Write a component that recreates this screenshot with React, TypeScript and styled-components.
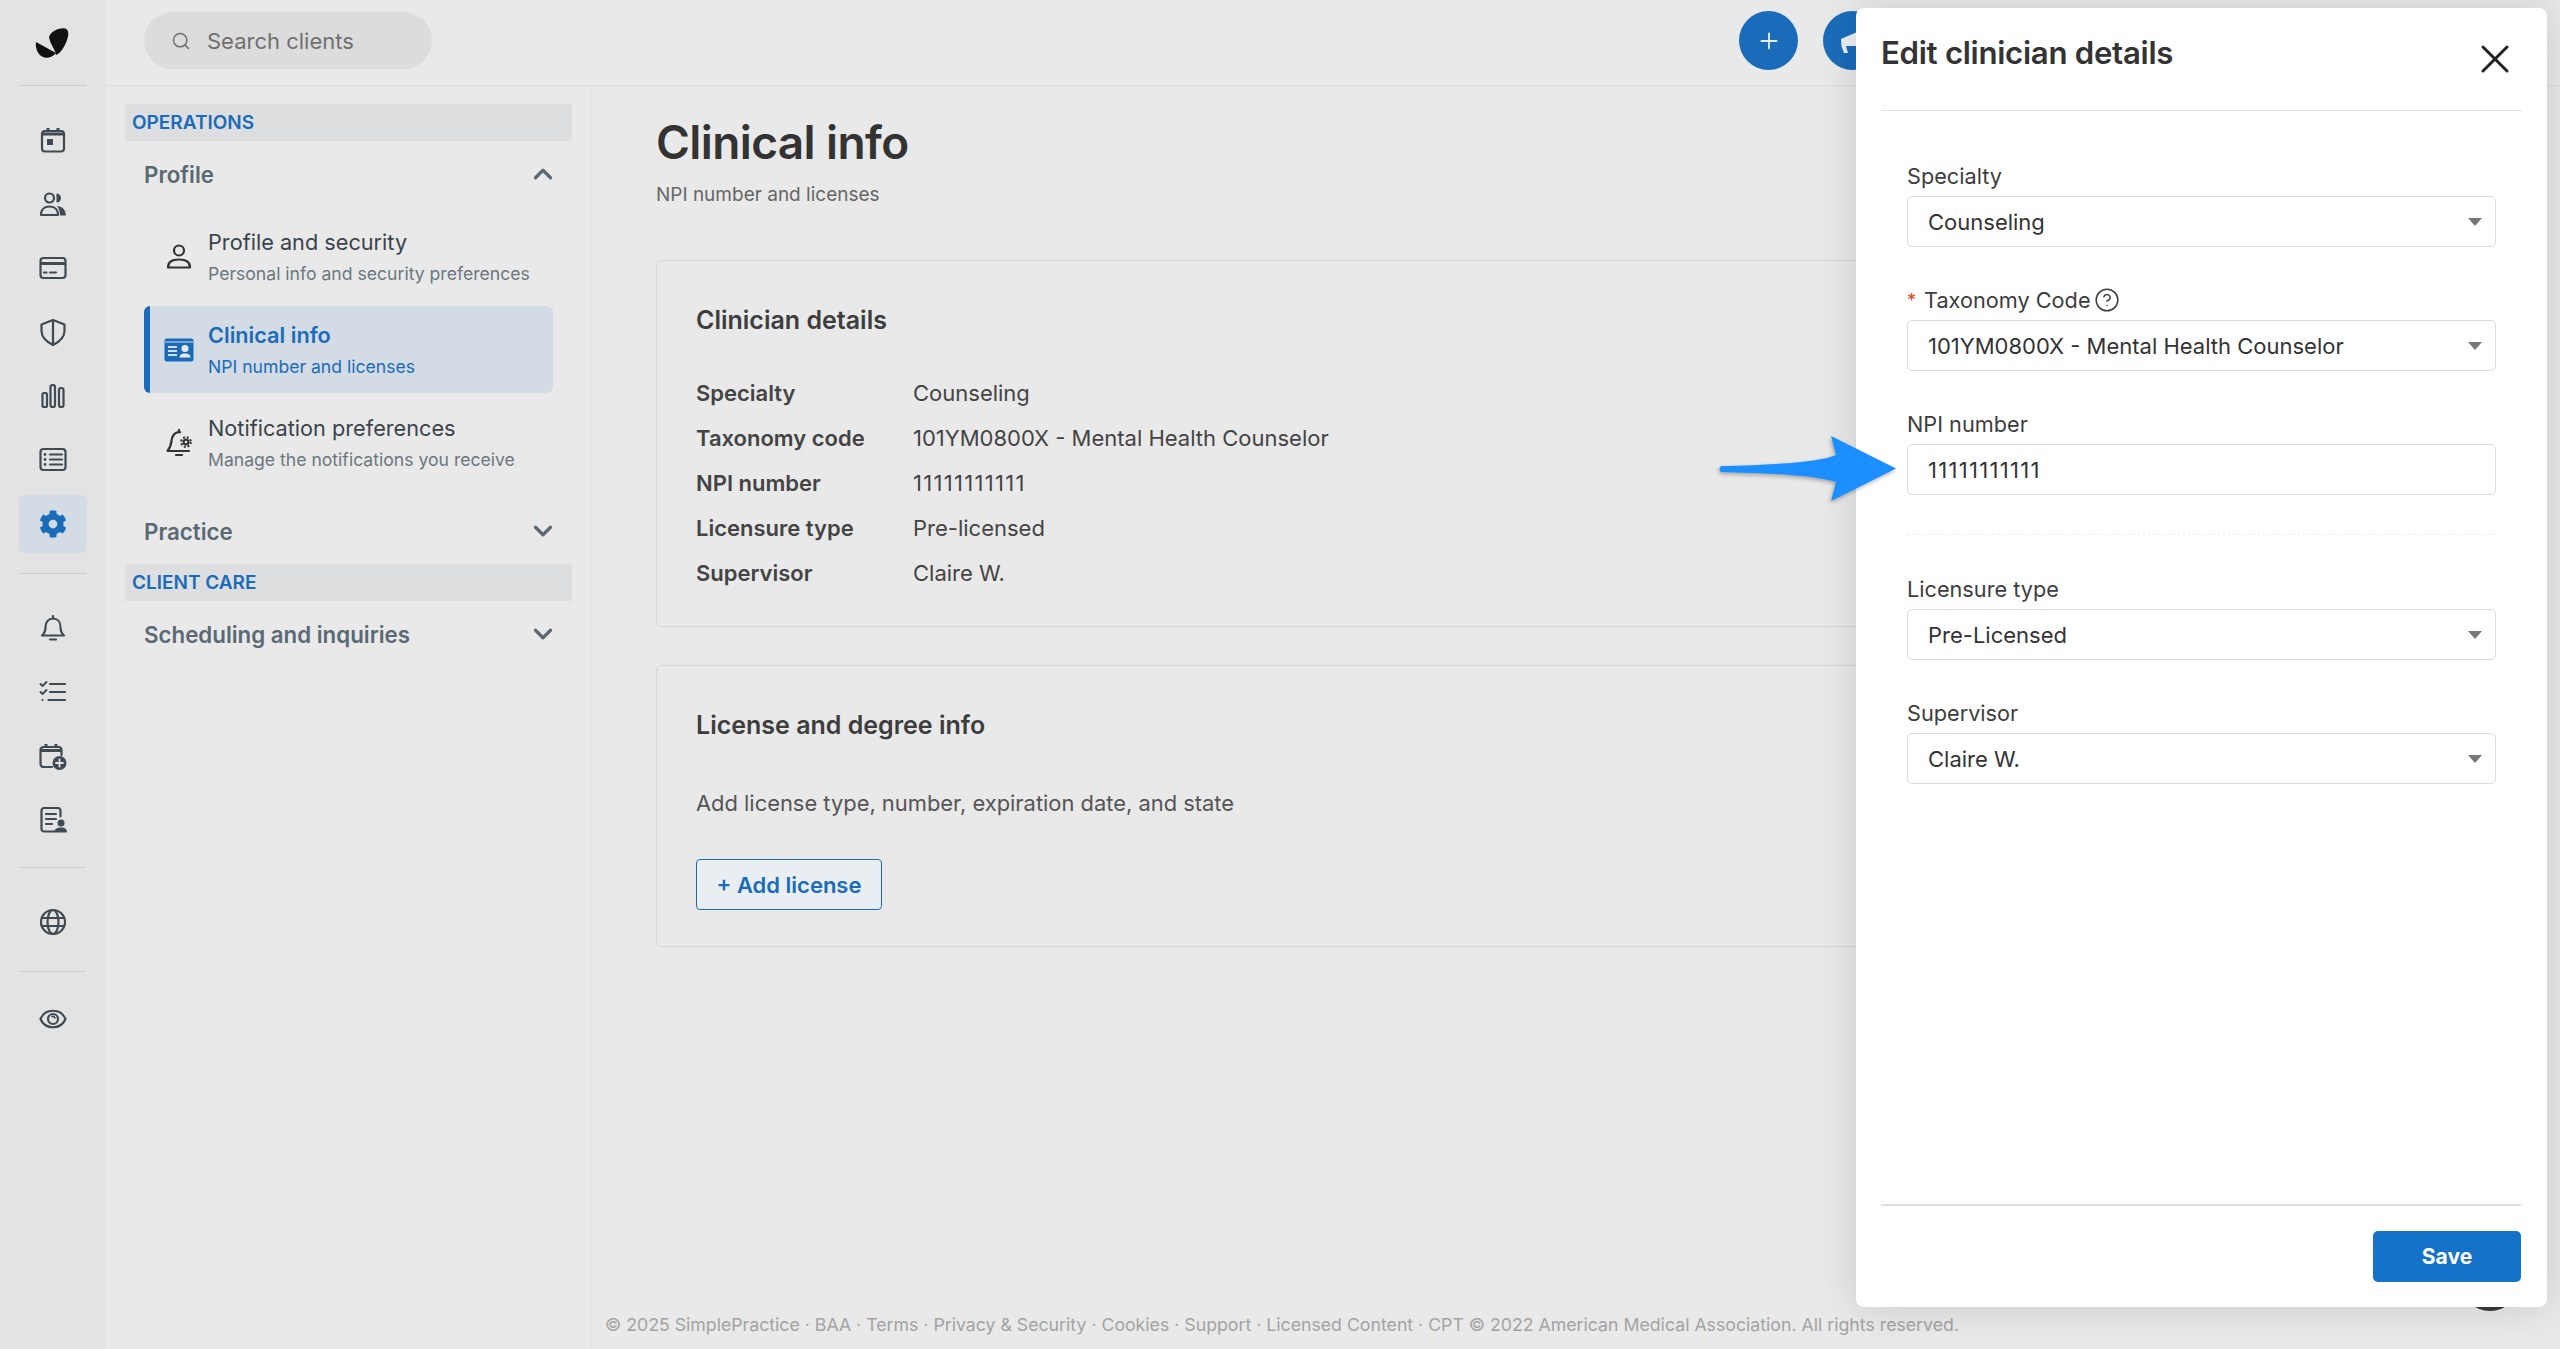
import { ReactNode } from 'react'
import styled, { createGlobalStyle } from 'styled-components'
import { ChevronDown, ChevronUp, CircleHelp, Plus, Search, X } from 'lucide-react'
import { FaCog } from 'react-icons/fa'

const blue = '#1a6cba'
const ink = '#3f4a52'

const GlobalStyle = createGlobalStyle`
  * { box-sizing: border-box; }
  html, body { margin: 0; padding: 0; }
  body {
    font-family: Inter, "Liberation Sans", sans-serif;
    background: #e9e9e9;
    color: #333;
  }
`

const Page = styled.div`
  position: relative;
  display: flex;
  width: 2560px;
  height: 1349px;
  overflow: hidden;
  background: #e9e9e9;
`

const Rail = styled.aside`
  width: 106px;
  flex-shrink: 0;
  background: #e3e3e3;
  padding: 0 19px;
  display: flex;
  flex-direction: column;
`

const LogoBox = styled.div`
  height: 86px;
  margin: 0 -19px 22px;
  display: flex;
  align-items: center;
  justify-content: center;
  position: relative;

  &::after {
    content: '';
    position: absolute;
    left: 19px;
    right: 20px;
    bottom: 0;
    height: 1px;
    background: #cdcdcd;
  }
`

const RailItem = styled.div<{ $active?: boolean }>`
  height: 64px;
  display: flex;
  align-items: center;
  justify-content: center;
  position: relative;
  color: ${ink};

  ${p => p.$active && `
    &::before {
      content: '';
      position: absolute;
      left: 0;
      right: 0;
      top: 3px;
      bottom: 3px;
      background: #d3dbe5;
      border-radius: 6px;
    }
  `}

  > svg { position: relative; }
`

const RailDivider = styled.div<{ $top: number; $bottom: number }>`
  height: 1px;
  background: #cdcdcd;
  margin: ${p => p.$top}px 1px ${p => p.$bottom}px 0;
`

const Right = styled.div`
  flex: 1;
  min-width: 0;
  display: flex;
  flex-direction: column;
`

const TopBar = styled.header`
  height: 86px;
  flex-shrink: 0;
  border-bottom: 1px solid #dcdcdc;
  display: flex;
  align-items: center;
  padding: 0 678px 4px 38px;
`

const SearchPill = styled.div`
  width: 288px;
  height: 57px;
  border-radius: 29px;
  background: #dcdcdc;
  display: flex;
  align-items: center;
  padding-left: 27px;
  gap: 16px;
  color: #6f6f6f;
  font-size: 22px;
`

const TopActions = styled.div`
  margin-left: auto;
  display: flex;
  gap: 25px;
`

const RoundButton = styled.div`
  width: 59px;
  height: 59px;
  border-radius: 50%;
  background: ${blue};
  color: #e9eef4;
  display: flex;
  align-items: center;
  justify-content: center;
`

const Columns = styled.div`
  flex: 1;
  min-height: 0;
  display: flex;
`

const SettingsNav = styled.nav`
  width: 486px;
  flex-shrink: 0;
  padding: 18px 19px 0;
  border-right: 1px solid #e2e2e2;
`

const SectionBand = styled.div`
  height: 37px;
  background: #dddee0;
  padding-left: 7px;
  display: flex;
  align-items: center;
  color: ${blue};
  font-size: 19px;
  font-weight: 600;
`

const GroupRow = styled.div`
  height: 66px;
  padding: 0 14px 0 19px;
  display: flex;
  align-items: center;
  justify-content: space-between;
  color: #5a6973;
  font-size: 22.3px;
  font-weight: 600;
`

const ItemList = styled.div`
  margin: 6px 19px 12px;
  display: flex;
  flex-direction: column;
  gap: 6px;
`

const NavItem = styled.div<{ $selected?: boolean }>`
  height: 87px;
  display: flex;
  align-items: center;
  border-left: 6px solid ${p => (p.$selected ? blue : 'transparent')};
  border-radius: 6px;
  background: ${p => (p.$selected ? '#d3dbe5' : 'transparent')};
`

const NavIcon = styled.div`
  width: 58px;
  flex-shrink: 0;
  display: flex;
  justify-content: center;
`

const NavText = styled.div`
  display: flex;
  flex-direction: column;
  gap: 8px;
`

const NavTitle = styled.div<{ $selected?: boolean }>`
  font-size: 21.7px;
  line-height: 26px;
  font-weight: ${p => (p.$selected ? 600 : 400)};
  color: ${p => (p.$selected ? blue : '#3a444c')};
`

const NavSub = styled.div<{ $selected?: boolean }>`
  font-size: 17.6px;
  line-height: 22px;
  color: ${p => (p.$selected ? blue : '#6b7780')};
`

const MainColumn = styled.div`
  flex: 1;
  min-width: 0;
  display: flex;
  flex-direction: column;
`

const Main = styled.main`
  flex: 1;
  padding: 28px 60px 0 64px;
`

const Heading = styled.h1`
  margin: 0;
  font-size: 46px;
  line-height: 56px;
  font-weight: 600;
  letter-spacing: -0.6px;
  color: #333;
`

const Subheading = styled.p`
  margin: 13px 0 53px;
  font-size: 19px;
  line-height: 24px;
  color: #666;
`

const Card = styled.section`
  border: 1px solid #d6d6d6;
  border-radius: 6px;
  padding: 43px 39px 31px;
  margin-bottom: 38px;
`

const CardTitle = styled.h2<{ $gap: number }>`
  margin: 0 0 ${p => p.$gap}px;
  font-size: 25px;
  line-height: 32px;
  font-weight: 600;
  color: #3d3d3d;
`

const DetailRow = styled.div`
  height: 45px;
  display: grid;
  grid-template-columns: 217px 1fr;
  align-items: center;
  font-size: 22px;
  color: #444;
`

const DetailLabel = styled.div`
  font-weight: 600;
`

const DetailValue = styled.div<{ $digits?: boolean }>`
  letter-spacing: ${p => (p.$digits ? '1.3px' : 'normal')};
`

const CardText = styled.p`
  margin: 0 0 41px;
  font-size: 21.9px;
  line-height: 30px;
  color: #555;
`

const OutlineButton = styled.button`
  display: block;
  width: 186px;
  height: 51px;
  padding: 0;
  border: 1.5px solid ${blue};
  border-radius: 4px;
  background: #e9eef2;
  color: ${blue};
  font-family: inherit;
  font-size: 22px;
  font-weight: 600;
  margin-bottom: 5px;
`

const Footer = styled.footer`
  height: 37px;
  padding: 1px 0 0 13px;
  font-size: 17.72px;
  line-height: 24px;
  color: #a3a3a3;
  white-space: nowrap;
`

const ChatBubble = styled.div`
  position: absolute;
  left: 2460px;
  top: 1251px;
  width: 60px;
  height: 60px;
  border-radius: 50%;
  background: #3a3a3a;
`

const Panel = styled.aside`
  position: absolute;
  left: 1856px;
  top: 8px;
  width: 691px;
  height: 1299px;
  background: #fff;
  border-radius: 8px;
  box-shadow: 0 0 40px rgba(0, 0, 0, 0.14);
  padding: 0 26px 0 25px;
  display: flex;
  flex-direction: column;
`

const PanelHeader = styled.div`
  height: 103px;
  flex-shrink: 0;
  border-bottom: 1.5px solid #dedede;
  display: flex;
  justify-content: space-between;
  padding-top: 24px;
`

const PanelTitle = styled.h2`
  margin: 0;
  font-size: 31.2px;
  line-height: 42px;
  font-weight: 600;
  letter-spacing: -0.3px;
  color: #333;
`

const CloseButton = styled.div`
  margin-right: 2px;
  padding-top: 3px;
  color: #222;
`

const PanelBody = styled.div`
  flex: 1;
  padding: 53px 25px 0 26px;
  display: flex;
  flex-direction: column;
`

const Field = styled.div`
  margin-bottom: 41px;
`

const FieldLabel = styled.div`
  display: flex;
  align-items: center;
  height: 24px;
  margin-bottom: 8px;
  font-size: 21.7px;
  color: #3d3d3d;
`

const Required = styled.span`
  color: #e8401c;
  font-size: 18px;
  margin-right: 8px;
`

const HelpIcon = styled.span`
  display: flex;
  margin-left: 3px;
`

const SelectBox = styled.div`
  height: 51px;
  border: 1.5px solid #dcdcdc;
  border-radius: 5px;
  padding: 0 20px;
  display: flex;
  align-items: center;
  justify-content: space-between;
  font-size: 22px;
  color: #333;
`

const Caret = styled.span`
  width: 0;
  height: 0;
  margin-right: -7px;
  border-left: 7px solid transparent;
  border-right: 7px solid transparent;
  border-top: 8px solid #777;
`

const TextInput = styled.input`
  display: block;
  width: 100%;
  height: 51px;
  border: 1.5px solid #dcdcdc;
  border-radius: 5px;
  padding: 0 20px;
  font-family: inherit;
  font-size: 22px;
  letter-spacing: 1.3px;
  color: #333;
  outline: none;
`

const DashedRule = styled.div`
  border-top: 1.5px dashed #eeeeee;
  margin: -2px 0 42px;
`

const PanelFooter = styled.div`
  height: 103px;
  flex-shrink: 0;
  border-top: 2px solid #dedede;
  padding-top: 25px;
  display: flex;
  justify-content: flex-end;
`

const SaveButton = styled.button`
  width: 148px;
  height: 51px;
  border: none;
  border-radius: 5px;
  background: #1473c9;
  color: #fff;
  font-family: inherit;
  font-size: 21px;
  font-weight: 700;
`

const ArrowMark = styled.svg`
  position: absolute;
  left: 1715px;
  top: 430px;
  width: 185px;
  height: 78px;
  overflow: visible;
  filter: drop-shadow(-1px 2px 2px rgba(0, 0, 0, 0.3));
`

// rail + nav icons are hand drawn, the packages have nothing close enough
const Glyph = ({ children, size = 28 }: { children: ReactNode; size?: number }) => (
  <svg
    width={size}
    height={size}
    viewBox="0 0 28 28"
    fill="none"
    stroke="currentColor"
    strokeWidth="2.2"
    strokeLinecap="round"
    strokeLinejoin="round"
  >
    {children}
  </svg>
)

const Logo = () => (
  <svg width="40" height="40" viewBox="13 6 40 40" fill="#111">
    <path d="M29 20C31 14 40 10.500 45 11.500C49 12.500 49 18 47 23C45 29 41 36 36 38C35 32 30 27 29 20Z" />
    <path d="M16 25L36 36C33 40 27 42 23 40C18 38 15 31 16 25Z" />
  </svg>
)

const CalendarIcon = () => (
  <Glyph>
    <rect x="3" y="5" width="22" height="20.500" rx="3" />
    <path d="M9 2v4M19 2v4M3 8h22" strokeWidth="3" strokeLinecap="butt" />
    <rect x="8" y="13" width="6" height="6" fill="currentColor" stroke="none" />
  </Glyph>
)

const PeopleIcon = () => (
  <Glyph>
    <circle cx="10.500" cy="8" r="4.500" />
    <path d="M2 25c0-6 4-8.500 8.500-8.500S19 19 19 25z" />
    <path d="M15 3.500a4.500 4.500 0 0 1 0 9z" fill="currentColor" transform="translate(2.500 0)" stroke="none" />
    <path d="M18 16c5 0 8.500 3.500 9 9.500h-6c0-4-1-7-3-9.500z" fill="currentColor" stroke="none" />
  </Glyph>
)

const CardIcon = () => (
  <Glyph>
    <rect x="1.500" y="4" width="25" height="20" rx="3" />
    <path d="M2 9.500h24" strokeWidth="3" strokeLinecap="butt" />
    <path d="M5 18.500h2.500M11 18.500h6" />
  </Glyph>
)

const ShieldIcon = () => (
  <Glyph>
    <path d="M14 2L25.500 6.500V13C25.500 20 20 24 14 27C8 24 2.500 20 2.500 13V6.500Z" />
    <path d="M14 2v25" />
  </Glyph>
)

const BarsIcon = () => (
  <Glyph>
    <rect x="3.500" y="11" width="4.500" height="14" rx="1.500" />
    <rect x="11.500" y="3" width="4.500" height="22" rx="2" />
    <rect x="20" y="6" width="4.500" height="19" rx="2" />
  </Glyph>
)

const ListIcon = () => (
  <Glyph>
    <rect x="1.500" y="3" width="25" height="21" rx="3" />
    <path d="M11 8.500h12M11 13.500h12M11 18.500h12" />
    <path d="M6 8.500h.01M6 13.500h.01M6 18.500h.01" strokeWidth="2.800" />
  </Glyph>
)

const BellIcon = () => (
  <Glyph>
    <path d="M3 21.500c2.500-2 3.500-4.500 3.500-8.500c0-5 3-8.500 7.500-8.500s7.500 3.500 7.500 8.500c0 4 1 6.500 3.500 8.500z" />
    <path d="M14 2v2.500M11 25.500h6" />
  </Glyph>
)

const ChecklistIcon = () => (
  <Glyph>
    <path d="M1.500 6l2 2l4-4M1.500 14l2 2l4-4" strokeWidth="1.900" />
    <path d="M11 6h15M11 14h15M9.500 22h16.500M3.500 22h.01" />
  </Glyph>
)

const CalendarPlusIcon = () => (
  <Glyph>
    <path d="M13 25H4.500A3 3 0 0 1 1.500 22V8A3 3 0 0 1 4.500 5h15a3 3 0 0 1 3 3v5" />
    <path d="M7 2v4M17 2v4M2 8.500h20" strokeWidth="3" strokeLinecap="butt" />
    <circle cx="20.500" cy="21" r="7" fill="currentColor" stroke="none" />
    <path d="M20.500 17.500v7M17 21h7" stroke="#e3e3e3" strokeWidth="1.800" />
  </Glyph>
)

const ReportIcon = () => (
  <Glyph>
    <path d="M15 25.500H5a2.500 2.500 0 0 1-2.500-2.500V4.500A2.500 2.500 0 0 1 5 2h14a2.500 2.500 0 0 1 2.500 2.500v6" />
    <path d="M7 8h10M7 13h10M7 18h6" />
    <circle cx="22" cy="17" r="3.500" fill="currentColor" stroke="none" />
    <path d="M15 26.500c0-3.500 3-5 7-5s6 1.500 6 5z" fill="currentColor" stroke="none" />
  </Glyph>
)

const GlobeIcon = () => (
  <Glyph>
    <circle cx="14" cy="14" r="12" />
    <ellipse cx="14" cy="14" rx="5.500" ry="12" />
    <path d="M3 10h22M3 18h22" />
  </Glyph>
)

const EyeIcon = () => (
  <Glyph>
    <path d="M1.500 14C6 3 22 3 26.500 14C22 25 6 25 1.500 14Z" />
    <circle cx="14" cy="14" r="5" />
    <path d="M13 11.500a2.500 2.500 0 0 1 3 1.500" strokeWidth="1.500" />
  </Glyph>
)

const PersonIcon = () => (
  <Glyph>
    <circle cx="14" cy="7.500" r="5" />
    <path d="M3 24.500c0-6 5-8 11-8s11 2 11 8z" />
  </Glyph>
)

const LicenseIcon = () => (
  <svg width="30" height="24" viewBox="0 0 30 24">
    <rect x="0.500" y="0.500" width="29" height="23" rx="2" fill={blue} />
    <path d="M1 4h28" stroke="#d3dbe5" strokeWidth="1" />
    <path d="M4 9h9M4 13h9M4 17h9" stroke="#d3dbe5" strokeWidth="1.800" />
    <circle cx="21" cy="10.500" r="3.500" fill="#e6ecf3" />
    <path d="M15.500 19.500c0-3 2.500-4 5.500-4s5.500 1 5.500 4z" fill="#e6ecf3" />
  </svg>
)

const BellGearIcon = () => (
  <Glyph>
    <path d="M15 3.200C9.500 2.500 7 7 6.500 12C6 16 5 19 2.500 22H24" />
    <path d="M14 1v2M11 26h6" />
    <circle cx="21" cy="13" r="3.500" fill="currentColor" stroke="none" />
    <circle cx="21" cy="13" r="4.800" strokeWidth="2" strokeDasharray="2 1.800" strokeLinecap="butt" />
    <circle cx="21" cy="13" r="1.300" fill="#e9e9e9" stroke="none" />
  </Glyph>
)

const MegaphoneIcon = () => (
  <svg width="34" height="30" viewBox="0 0 34 30" fill="#eef2f6">
    <path d="M5 13L28 3L32 20L10 20L12 27L8 27L5.500 20Z" />
  </svg>
)

const Arrow = () => (
  <ArrowMark viewBox="0 0 185 78">
    <path
      fill="#1b8fff"
      d="M116 6L181 38.500L116 71L121 52C95 44 40 43 6 42Q3 39 6 36C40 35 100 34 121 25Z"
    />
  </ArrowMark>
)

const details = [
  ['Specialty', 'Counseling'],
  ['Taxonomy code', '101YM0800X - Mental Health Counselor'],
  ['NPI number', '11111111111'],
  ['Licensure type', 'Pre-licensed'],
  ['Supervisor', 'Claire W.'],
]

const navItems = [
  { icon: <PersonIcon />, title: 'Profile and security', sub: 'Personal info and security preferences' },
  { icon: <LicenseIcon />, title: 'Clinical info', sub: 'NPI number and licenses', selected: true },
  { icon: <BellGearIcon />, title: 'Notification preferences', sub: 'Manage the notifications you receive' },
]

const Select = ({ value }: { value: string }) => (
  <SelectBox>
    {value}
    <Caret />
  </SelectBox>
)

export default function App() {
  return (
    <Page>
      <GlobalStyle />

      <Rail>
        <LogoBox>
          <Logo />
        </LogoBox>
        <RailItem><CalendarIcon /></RailItem>
        <RailItem><PeopleIcon /></RailItem>
        <RailItem><CardIcon /></RailItem>
        <RailItem><ShieldIcon /></RailItem>
        <RailItem><BarsIcon /></RailItem>
        <RailItem><ListIcon /></RailItem>
        <RailItem $active><FaCog size={28} color={blue} /></RailItem>
        <RailDivider $top={17} $bottom={22} />
        <RailItem><BellIcon /></RailItem>
        <RailItem><ChecklistIcon /></RailItem>
        <RailItem><CalendarPlusIcon /></RailItem>
        <RailItem><ReportIcon /></RailItem>
        <RailDivider $top={15} $bottom={22} />
        <RailItem><GlobeIcon /></RailItem>
        <RailDivider $top={17} $bottom={15} />
        <RailItem><EyeIcon /></RailItem>
      </Rail>

      <Right>
        <TopBar>
          <SearchPill>
            <Search size={20} strokeWidth={1.8} />
            Search clients
          </SearchPill>
          <TopActions>
            <RoundButton><Plus size={26} strokeWidth={1.7} /></RoundButton>
            <RoundButton><MegaphoneIcon /></RoundButton>
          </TopActions>
        </TopBar>

        <Columns>
          <SettingsNav>
            <SectionBand>OPERATIONS</SectionBand>
            <GroupRow>
              Profile
              <ChevronUp size={30} strokeWidth={2.6} />
            </GroupRow>
            <ItemList>
              {navItems.map(item => (
                <NavItem key={item.title} $selected={item.selected}>
                  <NavIcon>{item.icon}</NavIcon>
                  <NavText>
                    <NavTitle $selected={item.selected}>{item.title}</NavTitle>
                    <NavSub $selected={item.selected}>{item.sub}</NavSub>
                  </NavText>
                </NavItem>
              ))}
            </ItemList>
            <GroupRow>
              Practice
              <ChevronDown size={30} strokeWidth={2.6} />
            </GroupRow>
            <SectionBand>CLIENT CARE</SectionBand>
            <GroupRow>
              Scheduling and inquiries
              <ChevronDown size={30} strokeWidth={2.6} />
            </GroupRow>
          </SettingsNav>

          <MainColumn>
            <Main>
              <Heading>Clinical info</Heading>
              <Subheading>NPI number and licenses</Subheading>

              <Card>
                <CardTitle $gap={34}>Clinician details</CardTitle>
                {details.map(([label, value]) => (
                  <DetailRow key={label}>
                    <DetailLabel>{label}</DetailLabel>
                    <DetailValue $digits={label === 'NPI number'}>{value}</DetailValue>
                  </DetailRow>
                ))}
              </Card>

              <Card>
                <CardTitle $gap={47}>License and degree info</CardTitle>
                <CardText>Add license type, number, expiration date, and state</CardText>
                <OutlineButton>+ Add license</OutlineButton>
              </Card>
            </Main>
            <Footer>
              © 2025 SimplePractice · BAA · Terms · Privacy &amp; Security · Cookies · Support · Licensed Content · CPT © 2022 American Medical Association. All rights reserved.
            </Footer>
          </MainColumn>
        </Columns>
      </Right>

      <ChatBubble />

      <Panel>
        <PanelHeader>
          <PanelTitle>Edit clinician details</PanelTitle>
          <CloseButton><X size={48} strokeWidth={1.5} /></CloseButton>
        </PanelHeader>
        <PanelBody>
          <Field>
            <FieldLabel>Specialty</FieldLabel>
            <Select value="Counseling" />
          </Field>
          <Field>
            <FieldLabel>
              <Required>*</Required>
              Taxonomy Code
              <HelpIcon><CircleHelp size={26} strokeWidth={1.4} /></HelpIcon>
            </FieldLabel>
            <Select value="101YM0800X - Mental Health Counselor" />
          </Field>
          <Field>
            <FieldLabel>NPI number</FieldLabel>
            <TextInput readOnly value="11111111111" />
          </Field>
          <DashedRule />
          <Field>
            <FieldLabel>Licensure type</FieldLabel>
            <Select value="Pre-Licensed" />
          </Field>
          <Field>
            <FieldLabel>Supervisor</FieldLabel>
            <Select value="Claire W." />
          </Field>
        </PanelBody>
        <PanelFooter>
          <SaveButton>Save</SaveButton>
        </PanelFooter>
      </Panel>

      <Arrow />
    </Page>
  )
}
